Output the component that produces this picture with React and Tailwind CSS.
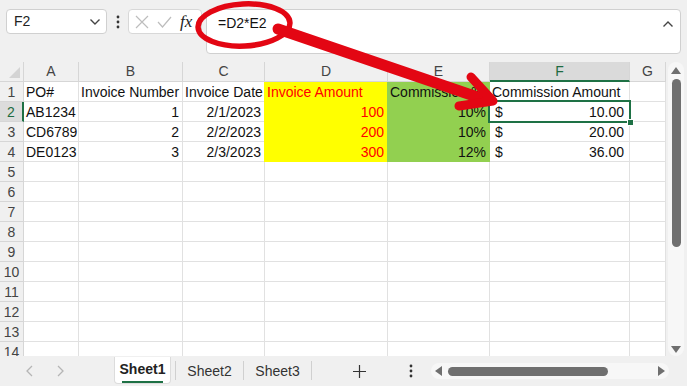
import React from "react";

const COLS = ["A", "B", "C", "D", "E", "F", "G"];
const WIDTHS = "24px 55px 104px 82px 123px 102px 140px 36px";

const DATA = [
  ["PO#", "Invoice Number", "Invoice Date", "Invoice Amount", "Commission %", "Commission Amount", ""],
  ["AB1234", "1", "2/1/2023", "100", "10%", "$|10.00", ""],
  ["CD6789", "2", "2/2/2023", "200", "10%", "$|20.00", ""],
  ["DE0123", "3", "2/3/2023", "300", "12%", "$|36.00", ""],
];

function Cell({ r, c, value }) {
  const isD = c === 3 && r <= 4;
  const isE = c === 4 && r <= 4;
  const numeric = r >= 2 && c >= 1 && c <= 4;
  let fill = "bg-white border-[#e1e1e1] text-[#111]";
  if (isD) fill = "bg-[#ffff00] border-[#ffff00] text-[#ff0000] shadow-[-1px_0_0_#ffff00]";
  if (isE) fill = "bg-[#92d050] border-[#92d050] text-[#111] shadow-[-1px_0_0_#92d050]";
  const align = numeric ? "text-right pr-[3px]" : "pl-[2px]";
  const cls =
    "h-[20px] border-r border-b overflow-hidden whitespace-nowrap leading-[20px] text-[14px] " +
    fill +
    " " +
    align;

  if (c === 5 && r >= 2 && r <= 4) {
    const [cur, amt] = value.split("|");
    return (
      <div className={cls + " flex justify-between pr-[5px] pl-[5px]"}>
        <span>{cur}</span>
        <span>{amt}</span>
      </div>
    );
  }
  return <div className={cls}>{value || ""}</div>;
}

function Grid() {
  const rows = Array.from({ length: 14 }, (_, i) => i + 1);
  return (
    <div className="relative w-[666px] h-[294px] overflow-hidden">
      <div className="grid" style={{ gridTemplateColumns: WIDTHS }}>
        <div className="relative h-[20px] bg-[#f0f0f0] border-r border-b border-[#d6d6d6]">
          <svg className="absolute right-[3px] bottom-[3px]" width="11" height="11" viewBox="0 0 11 11">
            <polygon points="11,0 11,11 0,11" fill="#d4d4d4" />
          </svg>
        </div>
        {COLS.map((l) =>
          l === "F" ? (
            <div
              key={l}
              className="h-[20px] bg-[#dadada] border-r border-[#d6d6d6] border-b-2 border-b-[#1e7145] text-center text-[14px] leading-[19px] text-[#1e6b41]"
            >
              {l}
            </div>
          ) : (
            <div
              key={l}
              className="h-[20px] bg-[#f0f0f0] border-r border-b border-[#d6d6d6] text-center text-[14px] leading-[19px] text-[#444]"
            >
              {l}
            </div>
          )
        )}
        {rows.map((r) => (
          <React.Fragment key={r}>
            {r === 2 ? (
              <div className="h-[20px] bg-[#dcdcdc] border-r-2 border-r-[#1e7145] border-b border-b-[#d6d6d6] text-center text-[14px] leading-[20px] text-[#1e6b41]">
                {r}
              </div>
            ) : (
              <div className="h-[20px] bg-[#f0f0f0] border-r border-b border-[#d6d6d6] text-center text-[14px] leading-[20px] text-[#444]">
                {r}
              </div>
            )}
            {COLS.map((_, c) => (
              <Cell key={c} r={r} c={c} value={r <= 4 ? DATA[r - 1][c] : undefined} />
            ))}
          </React.Fragment>
        ))}
      </div>
      <div className="absolute left-[488px] top-[38px] w-[143px] h-[23px] border-2 border-[#1e7145]" />
      <div className="absolute left-[627px] top-[57px] w-[7px] h-[7px] bg-[#1e7145] border border-white" />
    </div>
  );
}

function VScroll() {
  return (
    <div className="w-[21px] h-[294px] pl-[2px] pr-[3px]">
      <div className="h-full rounded-[8px] bg-[#f7f7f7] flex flex-col items-center pt-[5px] pb-[3px]">
        <svg width="10" height="7" viewBox="0 0 10 7">
          <polygon points="5,0 10,7 0,7" fill="#6f6f6f" />
        </svg>
        <div className="mt-[5px] w-[9px] h-[168px] rounded-full bg-[#6f6f6f]" />
        <div className="flex-1" />
        <svg width="10" height="7" viewBox="0 0 10 7">
          <polygon points="0,0 10,0 5,7" fill="#6f6f6f" />
        </svg>
      </div>
    </div>
  );
}

function Toolbar() {
  return (
    <div className="h-[62px] flex items-start pt-[9px] pl-[6px] pr-[6px]">
      <div className="w-[101px] h-[25px] bg-white border border-[#d0d0d0] rounded-[4px] flex items-center justify-between pl-[7px] pr-[5px] text-[14px] text-[#222]">
        <span>F2</span>
        <svg width="12" height="8" viewBox="0 0 12 8">
          <path d="M1.5 1.5 L6 6 L10.5 1.5" fill="none" stroke="#444" strokeWidth="1.4" />
        </svg>
      </div>
      <div className="w-[21px] h-[25px] flex items-center justify-center">
        <svg width="4" height="14" viewBox="0 0 4 14">
          <circle cx="2" cy="2" r="1.4" fill="#333" />
          <circle cx="2" cy="7" r="1.4" fill="#333" />
          <circle cx="2" cy="12" r="1.4" fill="#333" />
        </svg>
      </div>
      <div className="w-[74px] h-[25px] bg-white border border-[#d8d8d8] rounded-[4px] flex items-center pl-[6px] gap-[8px]">
        <svg width="14" height="14" viewBox="0 0 14 14">
          <path d="M1 1 L13 13 M13 1 L1 13" stroke="#bdbdbd" strokeWidth="1.2" />
        </svg>
        <svg width="15" height="12" viewBox="0 0 15 12">
          <path d="M1 6 L5.5 11 L14 1" fill="none" stroke="#bdbdbd" strokeWidth="1.2" />
        </svg>
        <span className="italic text-[17px] leading-none text-[#222] font-['Liberation_Serif',serif]">fx</span>
      </div>
      <div className="ml-[4px] flex-1 h-[45px] bg-white border border-[#d0d0d0] rounded-[4px] flex justify-between pl-[11px] pr-[6px] pt-[3px] text-[14px] text-[#111]">
        <span>=D2*E2</span>
        <svg className="mt-[7px]" width="12" height="8" viewBox="0 0 12 8">
          <path d="M1.5 6.5 L6 2 L10.5 6.5" fill="none" stroke="#444" strokeWidth="1.4" />
        </svg>
      </div>
    </div>
  );
}

function TabBar() {
  return (
    <div className="h-[30px] flex items-start text-[14px] text-[#333]">
      <div className="w-[114px] h-[30px] flex items-center pl-[25px] gap-[20px]">
        <svg width="10" height="12" viewBox="0 0 10 12">
          <path d="M7 1 L2 6 L7 11" fill="none" stroke="#b5b5b5" strokeWidth="1.3" />
        </svg>
        <svg width="10" height="12" viewBox="0 0 10 12">
          <path d="M3 1 L8 6 L3 11" fill="none" stroke="#b5b5b5" strokeWidth="1.3" />
        </svg>
      </div>
      <div className="w-[57px] h-[27px] mt-[1px] bg-white rounded-b-[4px] border border-t-0 border-[#dcdcdc] flex flex-col items-center pt-[2px]">
        <span className="font-bold text-[#222]">Sheet1</span>
        <div className="w-[41px] h-[2px] bg-[#1e7145] mt-[1px]" />
      </div>
      <div className="w-[4px]" />
      <div className="w-px h-[19px] mt-[5px] bg-[#d0d0d0]" />
      <div className="w-[67px] h-[30px] flex items-center justify-center">Sheet2</div>
      <div className="w-px h-[19px] mt-[5px] bg-[#d0d0d0]" />
      <div className="w-[67px] h-[30px] flex items-center justify-center">Sheet3</div>
      <div className="w-px h-[19px] mt-[5px] bg-[#d0d0d0]" />
      <div className="w-[94px] h-[30px] flex items-center justify-center">
        <svg width="13" height="13" viewBox="0 0 13 13">
          <path d="M6.5 0 V13 M0 6.5 H13" stroke="#333" strokeWidth="1.2" />
        </svg>
      </div>
      <div className="w-[10px] h-[30px] flex items-center justify-center">
        <svg width="4" height="14" viewBox="0 0 4 14">
          <circle cx="2" cy="2" r="1.4" fill="#333" />
          <circle cx="2" cy="7" r="1.4" fill="#333" />
          <circle cx="2" cy="12" r="1.4" fill="#333" />
        </svg>
      </div>
      <div className="ml-[15px] mt-[7px] w-[238px] h-[16px] rounded-full bg-[#f7f7f7] flex items-center px-[4px]">
        <svg width="8" height="10" viewBox="0 0 8 10">
          <polygon points="0,5 7,0 7,10" fill="#6f6f6f" />
        </svg>
        <div className="ml-[5px] w-[160px] h-[9px] rounded-full bg-[#6f6f6f]" />
        <div className="flex-1" />
        <svg width="8" height="10" viewBox="0 0 8 10">
          <polygon points="1,0 8,5 1,10" fill="#6f6f6f" />
        </svg>
      </div>
    </div>
  );
}

export default function App() {
  return (
    <div className="relative w-[687px] h-[386px] overflow-hidden bg-[#f0f0f0] font-['Liberation_Sans',Arial,sans-serif]">
      <Toolbar />
      <div className="flex">
        <Grid />
        <VScroll />
      </div>
      <TabBar />
      <svg className="absolute left-0 top-0 pointer-events-none" width="687" height="386" viewBox="0 0 687 386">
        <ellipse cx="244" cy="25" rx="46" ry="21" fill="none" stroke="#e30613" strokeWidth="5.5" transform="rotate(-3 244 25)" />
        <line x1="278" y1="29" x2="486" y2="100" stroke="#e30613" strokeWidth="11" strokeLinecap="round" />
        <path d="M471 77 L493 101 L459 106" fill="none" stroke="#e30613" strokeWidth="9" strokeLinecap="round" strokeLinejoin="round" />
      </svg>
    </div>
  );
}
